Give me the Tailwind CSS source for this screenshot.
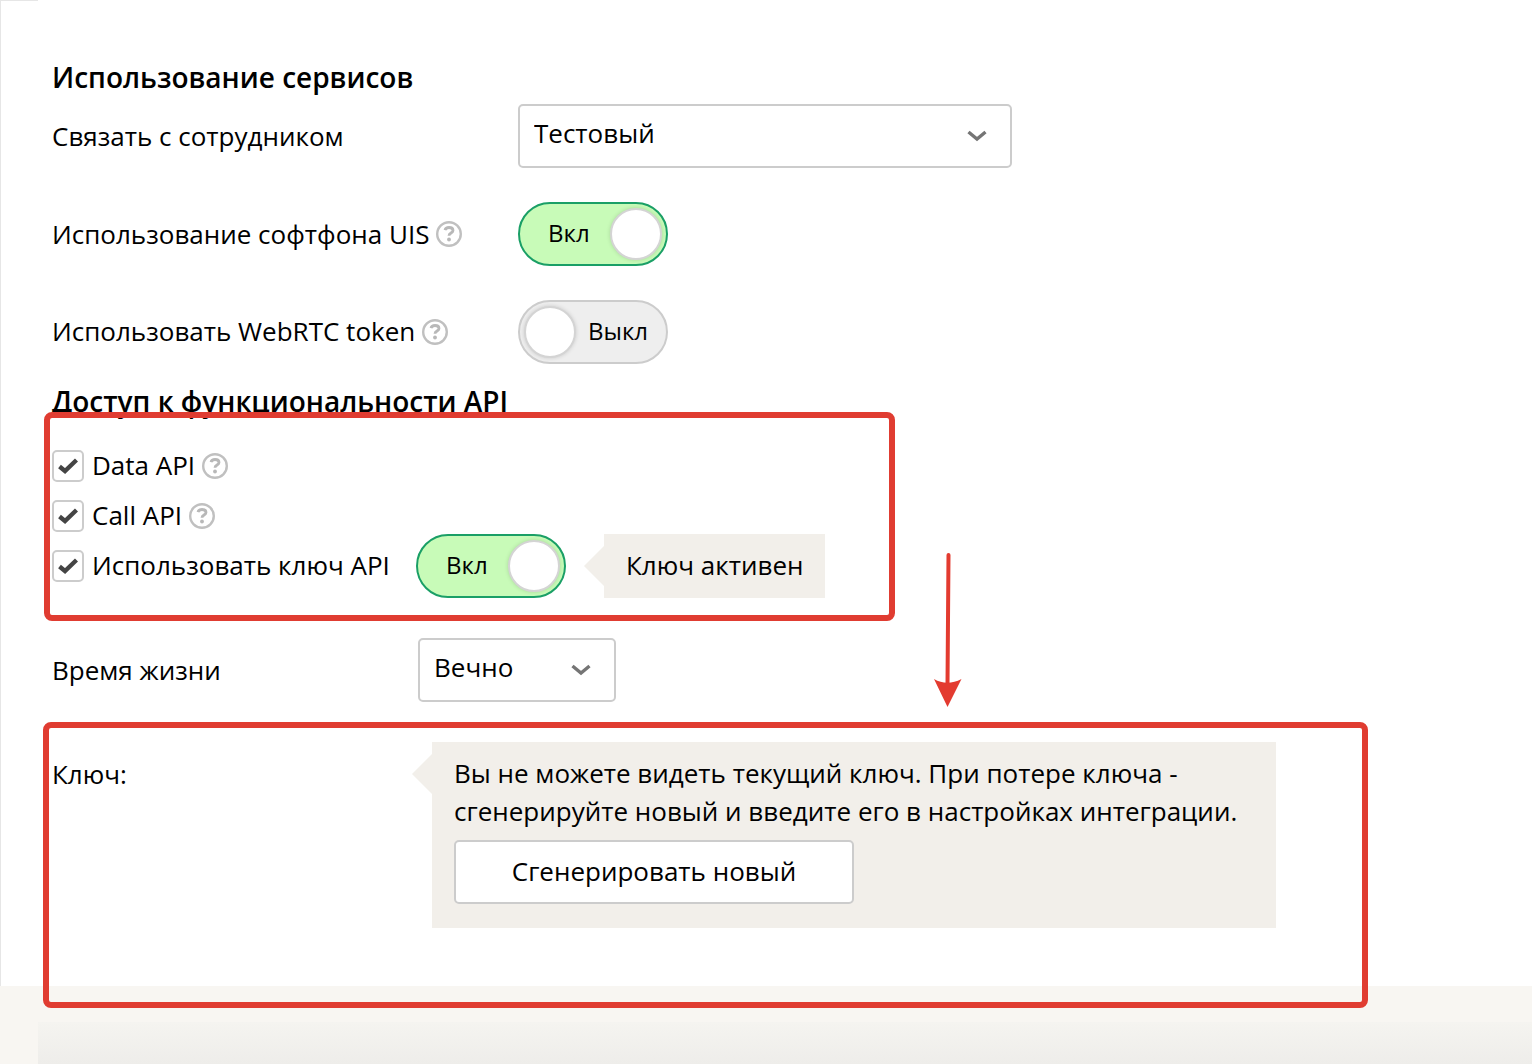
<!DOCTYPE html>
<html lang="ru">
<head>
    <meta charset="UTF-8" />
    <meta name="viewport" content="width=device-width, initial-scale=1.0" />
    <title>Использование сервисов</title>
    <script src="https://cdn.jsdelivr.net/npm/@tailwindcss/browser@4"></script>
</head>
<body class="font-['Open_Sans','Noto_Sans',sans-serif] text-[26px] leading-9 text-black bg-[#f8f6f2] min-h-screen flex flex-col">
    <!-- Icons -->
    <svg class="hidden" aria-hidden="true">
        <symbol id="icon-help" viewBox="0 0 26 26">
            <circle cx="13" cy="13" r="11.800" fill="#fff" stroke="#c0c0c0" stroke-width="2.400" />
            <path d="M9 9.200C9.500 7.200 11 6.500 13 6.500c2.400 0 4 1.100 4 3 0 2.600-4 2.500-4 5.300" fill="none" stroke="#b8b8b8" stroke-width="2.800" />
            <circle cx="13" cy="18.500" r="1.900" fill="#b8b8b8" />
        </symbol>
        <symbol id="icon-chevron" viewBox="0 0 20 12">
            <path d="M1.500 2 10 9 18.500 2" fill="none" stroke="#757575" stroke-width="3.400" />
        </symbol>
        <symbol id="icon-check" viewBox="0 0 20 16">
            <path d="M1.500 8.500 7 13 18.500 2" fill="none" stroke="#444" stroke-width="4.400" />
        </symbol>
    </svg>

    <main class="relative bg-white border-l border-[#e6e6e6] pl-[51px] pt-[59px] pb-[58px]">
        <div class="absolute left-0 top-0 w-[37px] h-px bg-[#e6e6e6]"></div>

        <h2 class="text-[28px] font-semibold">Использование сервисов</h2>
        <div class="mt-[9px] flex items-center">
            <label for="employee" class="w-[466px] shrink-0">Связать с сотрудником</label>
            <div class="relative w-full max-w-[494px]">
                <select id="employee" class="block w-full h-16 appearance-none rounded-[5px] border-2 border-[#ccc] bg-white pl-[14px] pr-12 pb-[6px]">
                    <option>Тестовый</option>
                </select>
                <svg class="absolute right-[25px] top-[26px] w-5 h-3 pointer-events-none"><use href="#icon-chevron" /></svg>
            </div>
        </div>

        <div class="mt-[34px] flex items-center">
            <div class="w-[466px] shrink-0 flex items-center gap-[7px]">
                <span id="softphoneLabel">Использование софтфона UIS</span>
                <svg class="size-[26px]"><use href="#icon-help" /></svg>
            </div>
            <label class="relative block w-[150px] h-16 shrink-0 rounded-full border-2 border-[#ccc] bg-[#eee] text-2xl leading-[58px] has-checked:border-[#1a9f66] has-checked:bg-[#c8fbb8]">
                <input type="checkbox" class="peer sr-only" aria-labelledby="softphoneLabel" checked />
                <span class="hidden pl-7 peer-checked:block">Вкл</span>
                <span class="block pl-[68px] peer-checked:hidden">Выкл</span>
                <span class="absolute top-1 left-1 size-[52px] rounded-full border-2 border-[#d4d4d4] bg-white shadow-[0_0_4px_rgba(0,0,0,0.15)] peer-checked:left-auto peer-checked:right-1"></span>
            </label>
        </div>

        <div class="mt-[34px] flex items-center">
            <div class="w-[466px] shrink-0 flex items-center gap-[7px]">
                <span id="webrtcLabel" class="pb-[2px]">Использовать WebRTC token</span>
                <svg class="size-[26px]"><use href="#icon-help" /></svg>
            </div>
            <label class="relative block w-[150px] h-16 shrink-0 rounded-full border-2 border-[#ccc] bg-[#eee] text-2xl leading-[58px] has-checked:border-[#1a9f66] has-checked:bg-[#c8fbb8]">
                <input type="checkbox" class="peer sr-only" aria-labelledby="webrtcLabel" />
                <span class="hidden pl-7 peer-checked:block">Вкл</span>
                <span class="block pl-[68px] peer-checked:hidden">Выкл</span>
                <span class="absolute top-1 left-1 size-[52px] rounded-full border-2 border-[#d4d4d4] bg-white shadow-[0_0_4px_rgba(0,0,0,0.15)] peer-checked:left-auto peer-checked:right-1"></span>
            </label>
        </div>

        <h2 class="mt-[19px] text-[28px] font-semibold">Доступ к функциональности API</h2>
        <div class="relative mt-[31px]">
            <div class="flex items-center h-8">
                <span class="relative size-8 mr-2">
                    <input type="checkbox" id="dataApi" class="peer block size-8 appearance-none rounded-[5px] border-2 border-[#ccc] bg-white" checked />
                    <svg class="absolute left-[6px] top-2 w-5 h-4 pointer-events-none hidden peer-checked:block"><use href="#icon-check" /></svg>
                </span>
                <label for="dataApi" class="mr-[7px] pb-[2px]">Data API</label>
                <svg class="size-[26px]"><use href="#icon-help" /></svg>
            </div>
            <div class="mt-[18px] flex items-center h-8">
                <span class="relative size-8 mr-2">
                    <input type="checkbox" id="callApi" class="peer block size-8 appearance-none rounded-[5px] border-2 border-[#ccc] bg-white" checked />
                    <svg class="absolute left-[6px] top-2 w-5 h-4 pointer-events-none hidden peer-checked:block"><use href="#icon-check" /></svg>
                </span>
                <label for="callApi" class="mr-[7px] pb-[2px]">Call API</label>
                <svg class="size-[26px]"><use href="#icon-help" /></svg>
            </div>
            <div class="mt-[2px] flex items-center">
                <div class="w-[364px] flex items-center">
                    <span class="relative size-8 mr-2">
                        <input type="checkbox" id="apiKey" class="peer block size-8 appearance-none rounded-[5px] border-2 border-[#ccc] bg-white" checked />
                        <svg class="absolute left-[6px] top-2 w-5 h-4 pointer-events-none hidden peer-checked:block"><use href="#icon-check" /></svg>
                    </span>
                    <label for="apiKey" class="pb-[2px]">Использовать ключ API</label>
                </div>
                <label class="relative block w-[150px] h-16 shrink-0 rounded-full border-2 border-[#ccc] bg-[#eee] text-2xl leading-[58px] has-checked:border-[#1a9f66] has-checked:bg-[#c8fbb8]">
                    <input type="checkbox" class="peer sr-only" aria-label="Ключ API" checked />
                    <span class="hidden pl-7 peer-checked:block">Вкл</span>
                    <span class="block pl-[68px] peer-checked:hidden">Выкл</span>
                    <span class="absolute top-1 left-1 size-[52px] rounded-full border-2 border-[#d4d4d4] bg-white shadow-[0_0_4px_rgba(0,0,0,0.15)] peer-checked:left-auto peer-checked:right-1"></span>
                </label>
                <svg class="ml-[18px] w-5 h-10" viewBox="0 0 20 40"><path d="M20 0v40L0 20z" fill="#f2efea" /></svg>
                <div class="bg-[#f2efea] px-[22px] pt-[13px] pb-[15px]">Ключ активен</div>
            </div>
            <div class="absolute -left-2 -top-[38px] -bottom-[23px] w-[851px] rounded-lg border-6 border-[#e03c31] pointer-events-none"></div>
            <svg class="absolute left-[881px] top-[102px] w-[30px] h-[156px] pointer-events-none" viewBox="0 0 30 156">
                <path d="M15.500 3 14.500 132" stroke="#e33b30" stroke-width="4" stroke-linecap="round" />
                <path d="M1 127q13 7.500 27.500 0L14.500 155z" fill="#e33b30" />
            </svg>
        </div>

        <div class="mt-10 flex items-center">
            <label for="lifetime" class="w-[366px] shrink-0">Время жизни</label>
            <div class="relative w-[198px]">
                <select id="lifetime" class="block w-full h-16 appearance-none rounded-[5px] border-2 border-[#ccc] bg-white pl-[14px] pr-12 pb-[6px]">
                    <option>Вечно</option>
                </select>
                <svg class="absolute right-[25px] top-[26px] w-5 h-3 pointer-events-none"><use href="#icon-chevron" /></svg>
            </div>
        </div>

        <div class="relative mt-10 flex items-start">
            <div class="w-[360px] shrink-0 pt-[14px]">Ключ:</div>
            <svg class="mt-3 w-5 h-10 shrink-0" viewBox="0 0 20 40"><path d="M20 0v40L0 20z" fill="#f2efea" /></svg>
            <div class="w-full max-w-[844px] bg-[#f2efea] px-[22px] pt-3 pb-6">
                <p class="leading-[38px]">Вы не можете видеть текущий ключ. При потере ключа - сгенерируйте новый и введите его в настройках интеграции.</p>
                <button type="button" class="mt-[10px] block w-[400px] h-16 rounded-[5px] border-2 border-[#ccc] bg-white pb-[2px]">Сгенерировать новый</button>
            </div>
            <div class="absolute -left-[9px] -top-5 -bottom-20 w-[1325px] rounded-lg border-6 border-[#e03c31] pointer-events-none"></div>
        </div>
    </main>

    <footer class="grow pl-[38px] pt-9 flex">
        <div class="grow bg-linear-to-b from-[#f5f4f0] to-[#eeedea]"></div>
    </footer>
</body>
</html>
